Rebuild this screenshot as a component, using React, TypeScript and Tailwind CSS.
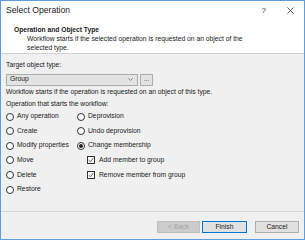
import React from "react";

const font = { fontFamily: '"Liberation Sans", Arial, sans-serif' };

function Radio({ label, checked = false }: { label: string; checked?: boolean }) {
  return (
    <div className="flex h-[14.6px] items-center">
      <span className="grid size-[8px] place-items-center rounded-full border border-[#333] bg-white">
        {checked && <span className="size-[4px] rounded-full bg-[#222]" />}
      </span>
      <span className="ml-[3px]">{label}</span>
    </div>
  );
}

function Check({ label }: { label: string }) {
  return (
    <div className="flex h-[14.6px] items-center pl-[10px]">
      <span className="grid size-[8px] place-items-center border border-[#333] bg-white">
        <svg viewBox="0 0 8 8" className="size-[6px]">
          <path d="M1 4.2 L3.1 6.2 L7 1.8" fill="none" stroke="#222" strokeWidth="1" />
        </svg>
      </span>
      <span className="ml-[4px]">{label}</span>
    </div>
  );
}

export default function App() {
  return (
    <div
      style={font}
      className="flex h-[240px] w-[305px] flex-col border border-[#5c9fdc] bg-[#f0f0f0] text-[6.75px] leading-none text-[#1a1a1a]"
    >
      {/* title bar */}
      <div className="flex h-[19px] shrink-0 items-center bg-white pl-[5px] pr-[10px] text-[8.6px]">
        <span>Select Operation</span>
        <span className="ml-auto text-[8px] text-[#333]">?</span>
        <svg viewBox="0 0 8 8" className="ml-[21px] size-[7px]">
          <path d="M0.5 0.5 L7.5 7.5 M7.5 0.5 L0.5 7.5" stroke="#333" strokeWidth="0.9" />
        </svg>
      </div>

      {/* header */}
      <div className="h-[34px] shrink-0 border-b border-[#d0d0d0] bg-white pl-[13px] pt-[7px]">
        <div className="text-[6.7px] font-bold">Operation and Object Type</div>
        <div className="pl-[13px] leading-[9px]">
          Workflow starts if the selected operation is requested on an object of the
          <br />
          selected type.
        </div>
      </div>

      {/* body */}
      <div className="flex-1 px-[5px] pt-[8px]">
        <div>Target object type:</div>
        <div className="mt-[5px] flex h-[12px] items-stretch gap-[2px]">
          <div className="flex w-[132px] items-center border border-[#adadad] bg-[#e3e3e3] pl-[3px] pr-[4px]">
            <span>Group</span>
            <svg viewBox="0 0 8 5" className="ml-auto h-[3px] w-[5px]">
              <path d="M0.5 0.5 L4 4 L7.5 0.5" fill="none" stroke="#444" strokeWidth="1" />
            </svg>
          </div>
          <div className="flex w-[13px] items-center justify-center border border-[#adadad] bg-[#e3e3e3] text-[#555]">
            ...
          </div>
        </div>
        <div className="mt-[3px]">Workflow starts if the operation is requested on an object of this type.</div>
        <div className="mt-[5px]">Operation that starts the workflow:</div>

        <div className="mt-[2px] flex">
          <div className="w-[71px]">
            <Radio label="Any operation" />
            <Radio label="Create" />
            <Radio label="Modify properties" />
            <Radio label="Move" />
            <Radio label="Delete" />
            <Radio label="Restore" />
          </div>
          <div>
            <Radio label="Deprovision" />
            <Radio label="Undo deprovision" />
            <Radio label="Change membership" checked />
            <Check label="Add member to group" />
            <Check label="Remove member from group" />
          </div>
        </div>
      </div>

      {/* footer */}
      <div className="flex h-[28px] shrink-0 items-start justify-end border-t border-[#d8d8d8] pr-[5px] pt-[9px]">
        <button className="h-[12px] w-[43px] border border-[#bfbfbf] bg-[#cccccc] text-[#a3a3a3]">&lt; Back</button>
        <button className="ml-[2px] h-[12px] w-[45px] border border-[#0078d7] bg-[#e1e1e1]">Finish</button>
        <button className="ml-[8px] h-[12px] w-[44px] border border-[#adadad] bg-[#e1e1e1]">Cancel</button>
      </div>
    </div>
  );
}
